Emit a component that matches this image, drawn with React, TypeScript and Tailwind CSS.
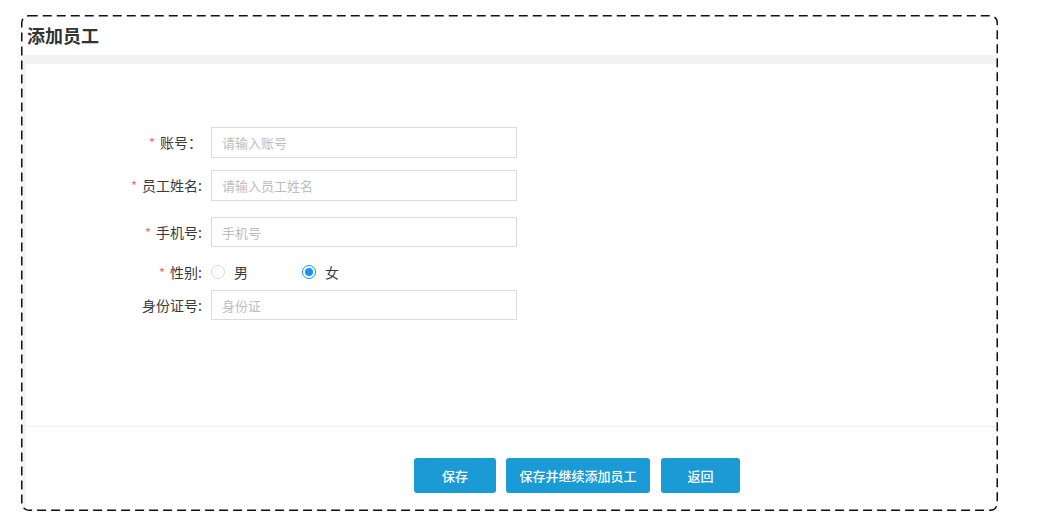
import React from "react";

const font = { fontFamily: '"Noto Sans CJK SC", "Noto Sans", sans-serif' };

function Row({
  label,
  required,
  children,
  className,
}: {
  label: string;
  required?: boolean;
  children: React.ReactNode;
  className?: string;
}) {
  return (
    <div className={`flex items-center ${className ?? ""}`}>
      <div className="w-[177px] shrink-0 text-right text-[14px] text-[#3a3a3a] pr-[1px]">
        {required && <span className="text-[#f56c6c] mr-[5px] text-[13px]">*</span>}
        {label}
      </div>
      <div className="ml-[8px] flex items-center h-full">{children}</div>
    </div>
  );
}

function Input({ placeholder }: { placeholder: string }) {
  return (
    <input
      placeholder={placeholder}
      className="w-[306px] h-full border border-[#dcdcdc] px-[10px] text-[13px] text-[#333] outline-none placeholder:text-[#bdbdbd]"
      style={font}
    />
  );
}

function Radio({ label, checked }: { label: string; checked?: boolean }) {
  return (
    <label className="flex items-center w-[91px]">
      <span
        className={`w-[14px] h-[14px] rounded-full border flex items-center justify-center ${
          checked ? "border-[#1890ff]" : "border-[#d9d9d9]"
        }`}
      >
        {checked && <span className="w-[8px] h-[8px] rounded-full bg-[#1890ff]" />}
      </span>
      <span className="ml-[9px] text-[14px] text-[#3a3a3a]">{label}</span>
    </label>
  );
}

export default function App() {
  const buttons = [
    { label: "保存", w: "w-[82px]" },
    { label: "保存并继续添加员工", w: "w-[144px]" },
    { label: "返回", w: "w-[79px]" },
  ];

  return (
    <div className="min-h-screen bg-white pt-[15px] pl-[21px]" style={font}>
      <div className="relative w-[977px] h-[496px] p-[1px] flex flex-col">
        {/* dashed outline */}
        <svg
          className="absolute inset-0 pointer-events-none"
          width="977"
          height="496"
          viewBox="0 0 977 496"
        >
          <rect
            x="0.75"
            y="0.75"
            width="975.5"
            height="494.5"
            rx="7"
            fill="none"
            stroke="#111"
            strokeWidth="1.5"
            strokeDasharray="9 5"
          />
        </svg>

        {/* Title */}
        <div className="h-[39px] flex items-center pl-[5px] text-[18px] font-bold text-[#333]">
          添加员工
        </div>

        {/* Body */}
        <div className="flex-1 bg-[#f2f2f2] pt-[9px] pl-[4px] pr-[1px] flex flex-col">
          <div className="flex-1 bg-white flex flex-col">
            <div className="h-[362px] pt-[63px]">
              <Row label="账号：" required className="h-[31px] mb-[12px]">
                <Input placeholder="请输入账号" />
              </Row>
              <Row label="员工姓名:" required className="h-[31px] mb-[16px]">
                <Input placeholder="请输入员工姓名" />
              </Row>
              <Row label="手机号:" required className="h-[30px] mb-[15px]">
                <Input placeholder="手机号" />
              </Row>
              <Row label="性别:" required className="h-[20px] mb-[8px]">
                <Radio label="男" />
                <Radio label="女" checked />
              </Row>
              <Row label="身份证号:" className="h-[30px]">
                <Input placeholder="身份证" />
              </Row>
            </div>

            <div className="border-t border-[#eeeeee] pt-[31px] flex gap-[10px] pl-[388px]">
              {buttons.map((b, i) => (
                <button
                  key={b.label}
                  className={`${b.w} h-[35px] rounded-[3px] bg-[#1a9bd6] text-white text-[13px] font-medium ${
                    i === 2 ? "ml-[1px]" : ""
                  }`}
                  style={font}
                >
                  {b.label}
                </button>
              ))}
            </div>
          </div>
        </div>
      </div>
    </div>
  );
}
